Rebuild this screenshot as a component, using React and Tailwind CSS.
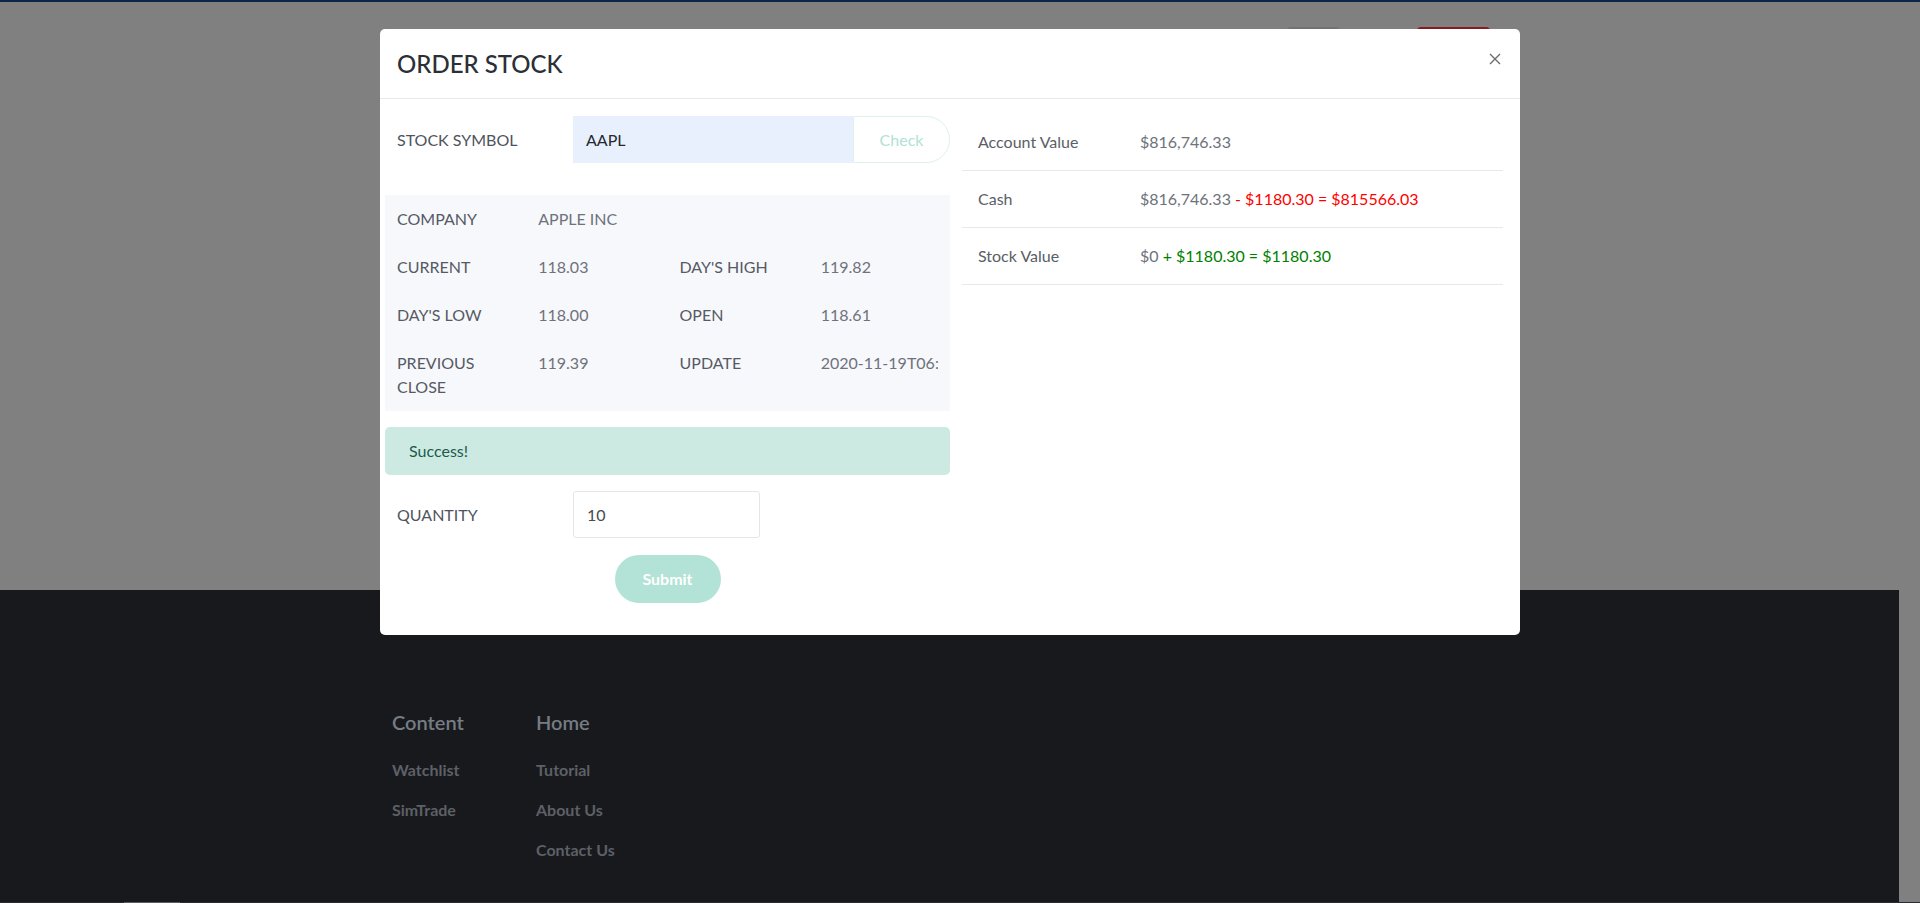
import React from "react";

const font = { fontFamily: "Lato, 'Noto Sans', sans-serif" };

function InfoRow({ children }) {
  return <div className="grid grid-cols-4">{children}</div>;
}

function Cell({ children, label }) {
  return (
    <div className={`px-3 py-3 leading-6 ${label ? "text-[#555a63]" : "text-[#6e727b]"}`}>
      <div className="overflow-hidden whitespace-nowrap">{children}</div>
    </div>
  );
}

export default function App() {
  return (
    <div className="relative w-[1920px] h-[903px] overflow-hidden text-[16px]" style={font}>
      {/* page behind overlay */}
      <div className="h-[2px] bg-[#0c2548]" />
      <div className="h-[588px] bg-[#808080] flex justify-end items-start pr-[430px] gap-[77px] pt-[25px]">
        <div className="w-[53px] h-[36px] rounded-[4px] bg-[#737373]" />
        <div className="w-[73px] h-[36px] rounded-[4px] bg-[#861c1f]" />
      </div>
      <div className="flex h-[312px]">
        <footer className="w-[1899px] bg-[#18191d] pl-[392px] pt-[120px] flex gap-[58px]">
          <div className="flex flex-col w-[86px]">
            <h5 className="text-[20px] leading-6 font-semibold text-[#767c84]">Content</h5>
            <div className="mt-[24px] flex flex-col gap-4 font-bold text-[#5d6066] leading-6">
              <span>Watchlist</span>
              <span>SimTrade</span>
            </div>
          </div>
          <div className="flex flex-col">
            <h5 className="text-[20px] leading-6 font-semibold text-[#767c84]">Home</h5>
            <div className="mt-[24px] flex flex-col gap-4 font-bold text-[#5d6066] leading-6">
              <span>Tutorial</span>
              <span>About Us</span>
              <span>Contact Us</span>
            </div>
          </div>
        </footer>
        <div className="flex-1 bg-[#808080]" />
      </div>
      <div className="h-px bg-[#2a2b2f] flex">
        <div className="w-[124px]" />
        <div className="w-[56px] bg-[#5c5d60]" />
      </div>

      {/* modal */}
      <div className="absolute left-[380px] top-[29px] w-[1140px] h-[606px] bg-white rounded-[5px] flex flex-col">
        <div className="h-[70px] border-b border-[#e6e8ef] flex items-center justify-between pl-[17px] pr-[19px]">
          <h4 className="text-[24px] leading-8 text-[#2c3036] font-medium">ORDER STOCK</h4>
          <svg width="12" height="12" viewBox="0 0 12 12" className="-mt-[9px]">
            <path d="M1 1 L11 11 M11 1 L1 11" stroke="#6a6c70" strokeWidth="1.4" />
          </svg>
        </div>
        <div className="flex pl-[5px] gap-3">
          {/* left column */}
          <div className="w-[565px] flex flex-col pt-[17px]">
            <div className="flex items-center">
              <div className="w-[188px] pl-3 text-[#4f545c]">STOCK SYMBOL</div>
              <div className="w-[280px] h-[47px] bg-[#e8f0fe] flex items-center pl-[13px] text-[#25282d]">
                AAPL
              </div>
              <div className="w-[97px] h-[47px] border border-[#dcf2ec] rounded-r-[24px] flex items-center justify-center text-[#b2e1d5]">
                Check
              </div>
            </div>
            <div className="mt-[32px] bg-[#f7f8fc]">
              <InfoRow>
                <Cell label>COMPANY</Cell>
                <Cell>APPLE INC</Cell>
                <Cell />
                <Cell />
              </InfoRow>
              <InfoRow>
                <Cell label>CURRENT</Cell>
                <Cell>118.03</Cell>
                <Cell label>DAY'S HIGH</Cell>
                <Cell>119.82</Cell>
              </InfoRow>
              <InfoRow>
                <Cell label>DAY'S LOW</Cell>
                <Cell>118.00</Cell>
                <Cell label>OPEN</Cell>
                <Cell>118.61</Cell>
              </InfoRow>
              <InfoRow>
                <Cell label>
                  PREVIOUS
                  <br />
                  CLOSE
                </Cell>
                <Cell>119.39</Cell>
                <Cell label>UPDATE</Cell>
                <Cell>2020-11-19T06:00:00</Cell>
              </InfoRow>
            </div>
            <div className="mt-4 h-[48px] rounded-[5px] bg-[#cceae2] flex items-center pl-6 text-[#1d5a4b]">
              Success!
            </div>
            <div className="mt-4 flex items-center">
              <div className="w-[188px] pl-3 text-[#4f545c]">QUANTITY</div>
              <div className="w-[187px] h-[47px] border border-[#e4e6ee] rounded-[3px] flex items-center pl-[13px] text-[#464a51]">
                10
              </div>
            </div>
            <div className="mt-[17px] flex justify-center">
              <button className="w-[106px] h-[48px] rounded-full bg-[#b3e2d6] text-white font-bold">
                Submit
              </button>
            </div>
          </div>
          {/* right column */}
          <div className="w-[541px] pt-[15px]">
            {[
              ["Account Value", <span>$816,746.33</span>],
              [
                "Cash",
                <span>
                  $816,746.33 <span className="text-[#ff0000]">- $1180.30 = $815566.03</span>
                </span>,
              ],
              [
                "Stock Value",
                <span>
                  $0 <span className="text-[#008000]">+ $1180.30 = $1180.30</span>
                </span>,
              ],
            ].map(([k, v], i) => (
              <div key={i} className="flex border-b border-[#e6e8ef] h-[57px] items-center">
                <div className="w-[162px] pl-4 text-[#5a5e66]">{k}</div>
                <div className="pl-4 text-[#6e727b]">{v}</div>
              </div>
            ))}
          </div>
        </div>
      </div>
    </div>
  );
}
